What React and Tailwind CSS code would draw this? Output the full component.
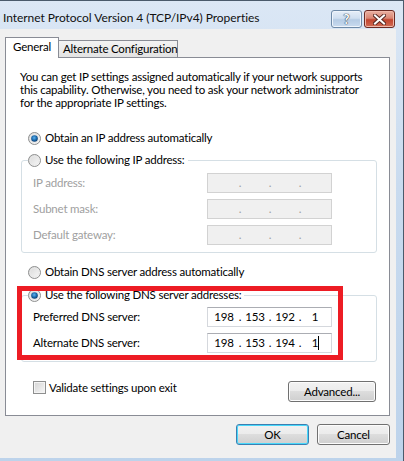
import React from "react";

const Radio = ({ checked }) => (
  <svg width="13" height="13" viewBox="0 0 13 13" className="shrink-0">
    <defs>
      <linearGradient id="rbg" x1="0" y1="0" x2="1" y2="1">
        <stop offset="0" stopColor="#d6d6d6" />
        <stop offset="1" stopColor="#fbfbfb" />
      </linearGradient>
      <radialGradient id="rdot" cx="45%" cy="40%" r="60%">
        <stop offset="0" stopColor="#5fb3f0" />
        <stop offset="0.6" stopColor="#1a6aad" />
        <stop offset="1" stopColor="#0b3c6e" />
      </radialGradient>
    </defs>
    <circle cx="6.5" cy="6.5" r="6" fill="url(#rbg)" stroke="#8e8f8f" strokeWidth="1" />
    <circle cx="6.5" cy="6.5" r="4.3" fill="none" stroke="#e9e9e9" strokeWidth="0.8" />
    {checked && <circle cx="6.5" cy="6.5" r="3.3" fill="url(#rdot)" />}
  </svg>
);

const IpBox = ({ values, disabled, caret }) => (
  <div
    className={
      disabled
        ? "flex h-[20px] w-[125px] items-center border border-[#d2d2d2] bg-[#f0f0f0] pl-[2px] text-[#a0a0a0]"
        : "flex h-[20px] w-[125px] items-center border border-[#d5d8dd] border-t-[#abadb3] bg-white pl-[2px] text-black"
    }
  >
    <span className="w-[28px] text-center">{values[0]}</span>
    <span className="w-[4px] text-center">.</span>
    <span className="w-[26px] text-center">{values[1]}</span>
    <span className="w-[4px] text-center">.</span>
    <span className="w-[26px] text-center">{values[2]}</span>
    <span className="w-[4px] text-center">.</span>
    <span className="relative w-[26px] text-center">
      {values[3]}
      {caret && <span className="absolute left-[16px] top-[1px] h-[14px] w-px bg-black" />}
    </span>
  </div>
);

const Row = ({ label, disabled, values, caret }) => (
  <div className="flex h-[20px] items-center">
    <span className={disabled ? "w-[174px] text-[#a0a0a0]" : "w-[174px] text-black"}>{label}</span>
    <IpBox values={values} disabled={disabled} caret={caret} />
  </div>
);

const WinButton = ({ children, def, className }) => (
  <div
    className={
      "flex h-[21px] items-center justify-center rounded-[3px] border bg-[linear-gradient(#f2f2f2_0%,#ebebeb_49%,#dddddd_50%,#cfcfcf_100%)] " +
      (def
        ? "border-[#3c7fb1] shadow-[inset_0_0_0_1px_#48d8fb] "
        : "border-[#707070] shadow-[inset_0_0_0_1px_#fcfcfc] ") +
      className
    }
  >
    {children}
  </div>
);

export default function App() {
  return (
    <div className="relative flex h-[461px] w-[404px] flex-col overflow-hidden border-r border-t border-[#4a5a6b] bg-[linear-gradient(180deg,#dbe7f5_0%,#c9dbef_40%,#bdd3eb_100%)] text-[11.5px] leading-[16px] tracking-[-0.2px] text-black [font-family:Lato,sans-serif]">
      {/* Title bar */}
      <div className="flex h-[28px] shrink-0 items-center pl-[3px] pr-[8px]">
        <span className="flex-1 whitespace-nowrap pt-[5px] text-[12px] tracking-[-0.05px] text-[#111]">
          Internet Protocol Version 4 (TCP/IPv4) Properties
        </span>
        <div className="flex gap-[2px] self-start pt-[9px]">
          <div className="flex h-[18px] w-[31px] items-center justify-center rounded-[3px] border border-[#6e8aa8] bg-[linear-gradient(#e6eef8_0%,#d0dff0_45%,#b5cbe4_55%,#c9dbef_100%)] shadow-[inset_0_0_0_1px_#eef4fb]">
            <span className="text-[13px] font-bold leading-none text-white [text-shadow:0_0_1px_#39475a,0_0_1px_#39475a,0_0_1px_#39475a]">?</span>
          </div>
          <div className="flex h-[18px] w-[31px] items-center justify-center rounded-[3px] border border-[#6b2b24] bg-[linear-gradient(#eab1a3_0%,#d98673_45%,#c2452f_55%,#d06c55_100%)] shadow-[inset_0_0_0_1px_#f0b8aa]">
            <svg width="13" height="11" viewBox="0 0 13 11">
              <path d="M2 1.5 L11 9.5 M11 1.5 L2 9.5" stroke="#5a2a24" strokeWidth="4" strokeLinecap="square" />
              <path d="M2 1.5 L11 9.5 M11 1.5 L2 9.5" stroke="#ffffff" strokeWidth="2" strokeLinecap="square" />
            </svg>
          </div>
        </div>
      </div>

      {/* Client area */}
      <div className="flex h-[429px] w-[396px] shrink-0 flex-col bg-[#f0f0f0] pt-[8px]">
        {/* Tabs */}
        <div className="flex h-[20px] items-end pl-[5px]">
          <div className="relative z-10 -mb-px flex h-[21px] w-[54px] items-start whitespace-nowrap border border-b-0 border-[#898c95] bg-white pl-[7px] pt-[1px]">
            General
          </div>
          <div className="-ml-px flex h-[17px] w-[120px] items-start whitespace-nowrap border border-b-0 border-[#898c95] bg-[linear-gradient(#f3f3f3,#e3e3e3)] pl-[4px] pt-0">
            Alternate Configuration
          </div>
        </div>

        {/* Panel */}
        <div className="ml-[5px] mr-[6px] flex flex-col border border-[#898c95] bg-white">
          <p className="ml-[14px] mt-[12px] whitespace-nowrap leading-[13px]">
            You can get IP settings assigned automatically if your network supports
            <br />
            this capability. Otherwise, you need to ask your network administrator
            <br />
            for the appropriate IP settings.
          </p>

          <div className="ml-[22px] mt-[21px] flex h-[16px] items-center gap-[4px]">
            <Radio checked />
            <span>Obtain an IP address automatically</span>
          </div>

          <fieldset className="ml-[15px] mt-[6px] w-[356px] rounded-[3px] border border-[#d5dfe5]">
            <legend className="ml-[6px] pr-[3px]">
              <div className="flex h-[16px] items-center gap-[4px]">
                <Radio />
                <span>Use the following IP address:</span>
              </div>
            </legend>
            <div className="flex flex-col gap-[6px] pb-[7px] pl-[11px] pt-[5px]">
              <Row label="IP address:" disabled values={["", "", "", ""]} />
              <Row label="Subnet mask:" disabled values={["", "", "", ""]} />
              <Row label="Default gateway:" disabled values={["", "", "", ""]} />
            </div>
          </fieldset>

          <div className="ml-[22px] mt-[11px] flex h-[16px] items-center gap-[4px]">
            <Radio />
            <span>Obtain DNS server address automatically</span>
          </div>

          <fieldset className="ml-[15px] mt-[7px] w-[356px] rounded-[3px] border border-[#d5dfe5]">
            <legend className="ml-[6px] pr-[3px]">
              <div className="flex h-[16px] items-center gap-[4px]">
                <Radio checked />
                <span>Use the following DNS server addresses:</span>
              </div>
            </legend>
            <div className="flex flex-col gap-[6px] pb-[8px] pl-[11px] pt-[4px]">
              <Row label="Preferred DNS server:" values={["198", "153", "192", "1"]} />
              <Row label="Alternate DNS server:" values={["198", "153", "194", "1"]} caret />
            </div>
          </fieldset>

          <div className="mt-[19px] flex items-start justify-between pb-[13px] pl-[27px] pr-[13px]">
            <div className="flex h-[13px] items-center gap-[3px]">
              <div className="h-[13px] w-[13px] border border-[#8e8f8f] bg-[linear-gradient(135deg,#d4d4d4,#f7f7f7)] shadow-[inset_0_0_0_1px_#f4f4f4]" />
              <span className="leading-[13px]">Validate settings upon exit</span>
            </div>
            <WinButton className="w-[88px]">Advanced...</WinButton>
          </div>
        </div>

        {/* Bottom buttons */}
        <div className="mt-[8px] flex justify-end gap-[8px] pr-[6px]">
          <WinButton def className="w-[73px]">OK</WinButton>
          <WinButton className="w-[73px]">Cancel</WinButton>
        </div>
      </div>

      {/* Red highlight annotation */}
      <div className="pointer-events-none absolute left-[17px] top-[285px] h-[74px] w-[326px] border-[5px] border-[#ed1c24]" />
    </div>
  );
}
